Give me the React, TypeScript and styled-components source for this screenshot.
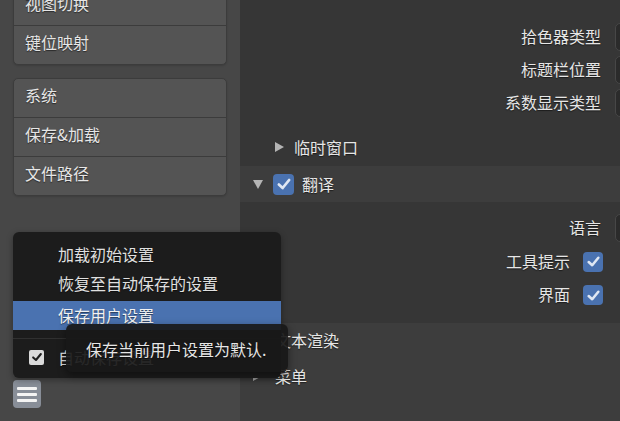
import React from "react";
import styled, { createGlobalStyle } from "styled-components";

const Global = createGlobalStyle`
  html, body { margin: 0; padding: 0; background: #363636; }
  body { font-family: "Noto Sans CJK SC", "Noto Sans", sans-serif; }
  * { box-sizing: border-box; }
`;

const Screen = styled.div`
  position: relative;
  width: 620px;
  height: 421px;
  overflow: hidden;
  display: flex;
  font-family: "Noto Sans CJK SC", "Noto Sans", sans-serif;
  font-size: 16px;
  color: #e6e6e6;
  text-shadow: 0 1px 1px rgba(0, 0, 0, 0.5);
`;

const Sidebar = styled.div`
  width: 240px;
  flex: none;
  background: #474747;
  display: flex;
  flex-direction: column;
  padding: 0 13px 13px 13px;
`;

const NavGroup = styled.div<{ $offset?: number }>`
  display: flex;
  flex-direction: column;
  margin-top: ${(p) => p.$offset ?? 13}px;
  background: #545454;
  border: 1px solid #3c3c3c;
  border-radius: 5px;
  box-shadow: 0 1px 2px rgba(0, 0, 0, 0.15);
`;

const NavItem = styled.div`
  height: 38px;
  display: flex;
  align-items: center;
  padding: 0 0 6px 11px;
  & + & { border-top: 1px solid #3c3c3c; height: 39px; }
`;

const Spacer = styled.div`
  flex: 1;
`;

const MenuButton = styled.div`
  width: 28px;
  height: 28px;
  border-radius: 4px;
  background: #888e98;
  display: flex;
  flex-direction: column;
  justify-content: center;
  align-items: center;
  gap: 3px;
`;

const Bar = styled.div`
  width: 20px;
  height: 3px;
  border-radius: 1px;
  background: #f4f4f4;
`;

const Main = styled.div`
  flex: 1;
  background: #363636;
  display: flex;
  flex-direction: column;
  padding-top: 23px;
  overflow: hidden;
`;

const PropList = styled.div<{ $gap: number }>`
  display: flex;
  flex-direction: column;
  gap: ${(p) => p.$gap}px;
`;

const PropRow = styled.div`
  height: 28px;
  display: grid;
  grid-template-columns: 361px 100px;
  column-gap: 14px;
  align-items: center;
`;

const Label = styled.div`
  text-align: right;
  white-space: nowrap;
  padding-bottom: 2px;
`;

const Dropdown = styled.div`
  height: 28px;
  border-radius: 5px;
  background: #2b2b2b;
  border: 1px solid #474747;
`;

const CheckRow = styled.div`
  height: 28px;
  display: flex;
  justify-content: flex-end;
  align-items: center;
  gap: 13px;
  padding-right: 17px;
`;

const SubHeader = styled.div`
  margin-top: 14px;
  height: 35px;
  display: flex;
  align-items: center;
  padding: 0 0 4px 35px;
  gap: 10px;
`;

const PanelHeader = styled.div<{ $bg?: string; $lift?: number; $gap?: number }>`
  height: 36px;
  flex: none;
  display: flex;
  align-items: center;
  padding: 0 0 ${(p) => p.$lift ?? 0}px 13px;
  gap: ${(p) => p.$gap ?? 10}px;
  background: ${(p) => p.$bg ?? "#3d3d3d"};
`;

const HeaderTitle = styled.span<{ $pull?: number }>`
  margin-left: ${(p) => -(p.$pull ?? 0)}px;
`;

const PanelBody = styled.div`
  padding: 12px 0 14px 0;
`;

const Lower = styled.div`
  flex: 1;
  background: #3d3d3d;
`;

const CheckBox = styled.div<{ $size: number }>`
  width: ${(p) => p.$size}px;
  height: ${(p) => p.$size}px;
  border-radius: 4px;
  background: #4a72b0;
  display: flex;
  align-items: center;
  justify-content: center;
  flex: none;
`;

const Popup = styled.div`
  position: absolute;
  left: 13px;
  top: 232px;
  width: 268px;
  height: 146px;
  background: #1c1c1c;
  border-radius: 6px;
  box-shadow: 0 2px 6px rgba(0, 0, 0, 0.35);
  padding-top: 8px;
  display: flex;
  flex-direction: column;
  color: #e0e0e0;
`;

const PopItem = styled.div<{ $active?: boolean }>`
  height: 29px;
  flex: none;
  display: flex;
  align-items: center;
  padding: 0 0 1px 45px;
  margin-top: ${(p) => (p.$active ? 3 : 0)}px;
  background: ${(p) => (p.$active ? "#4a72b0" : "transparent")};
  color: ${(p) => (p.$active ? "#f2f2f2" : "inherit")};
`;

const Separator = styled.div`
  height: 1px;
  flex: none;
  margin-top: 8px;
  background: #303030;
`;

const PopCheckRow = styled.div`
  height: 28px;
  flex: none;
  margin-top: 4px;
  display: flex;
  align-items: center;
  padding-left: 16px;
  gap: 14px;
`;

const LightBox = styled.div`
  width: 15px;
  height: 15px;
  border-radius: 2px;
  background: #dadada;
  display: flex;
  align-items: center;
  justify-content: center;
`;

const Tooltip = styled.div`
  position: absolute;
  left: 66px;
  top: 324px;
  width: 222px;
  height: 48px;
  background: rgba(24, 24, 24, 0.92);
  border-radius: 6px;
  box-shadow: 0 3px 8px rgba(0, 0, 0, 0.45);
  display: flex;
  align-items: center;
  padding: 2px 0 0 20px;
  color: #e6e6e6;
  white-space: nowrap;
`;

const TriRight = () => (
  <svg width="9" height="10" viewBox="0 0 9 10">
    <polygon points="0,0 9,5 0,10" fill="#b4b4b4" />
  </svg>
);

const TriDown = () => (
  <svg width="10" height="9" viewBox="0 0 10 9">
    <polygon points="0,0 10,0 5,9" fill="#b4b4b4" />
  </svg>
);

const Check = ({ color, w }: { color: string; w: number }) => (
  <svg width={w} height={w} viewBox="0 0 14 14">
    <polyline
      points="2.5,7.5 5.8,10.5 11.5,3.5"
      fill="none"
      stroke={color}
      strokeWidth="2.4"
      strokeLinecap="round"
      strokeLinejoin="round"
    />
  </svg>
);

const BlueCheck = ({ size }: { size: number }) => (
  <CheckBox $size={size}>
    <Check color="#dfe7f3" w={size - 5} />
  </CheckBox>
);

export default function App() {
  return (
    <>
      <Global />
      <Screen>
        <Sidebar>
          <NavGroup $offset={-14}>
            <NavItem>视图切换</NavItem>
            <NavItem>键位映射</NavItem>
          </NavGroup>
          <NavGroup>
            <NavItem>系统</NavItem>
            <NavItem>保存&amp;加载</NavItem>
            <NavItem>文件路径</NavItem>
          </NavGroup>
          <Spacer />
          <MenuButton>
            <Bar />
            <Bar />
            <Bar />
          </MenuButton>
        </Sidebar>
        <Main>
          <PropList $gap={5}>
            <PropRow>
              <Label>拾色器类型</Label>
              <Dropdown />
            </PropRow>
            <PropRow>
              <Label>标题栏位置</Label>
              <Dropdown />
            </PropRow>
            <PropRow>
              <Label>系数显示类型</Label>
              <Dropdown />
            </PropRow>
          </PropList>
          <SubHeader>
            <TriRight />
            <span>临时窗口</span>
          </SubHeader>
          <PanelHeader>
            <TriDown />
            <BlueCheck size={21} />
            <HeaderTitle $pull={2}>翻译</HeaderTitle>
          </PanelHeader>
          <PanelBody>
            <PropList $gap={5.5}>
              <PropRow>
                <Label>语言</Label>
                <Dropdown />
              </PropRow>
              <CheckRow>
                <Label>工具提示</Label>
                <BlueCheck size={20} />
              </CheckRow>
              <CheckRow>
                <Label>界面</Label>
                <BlueCheck size={20} />
              </CheckRow>
            </PropList>
          </PanelBody>
          <Lower>
            <PanelHeader $bg="transparent" $lift={3} $gap={13}>
              <TriRight />
              <HeaderTitle>文本渲染</HeaderTitle>
            </PanelHeader>
            <PanelHeader $bg="transparent" $lift={3} $gap={13}>
              <TriRight />
              <HeaderTitle>菜单</HeaderTitle>
            </PanelHeader>
          </Lower>
        </Main>
        <Popup>
          <PopItem>加载初始设置</PopItem>
          <PopItem>恢复至自动保存的设置</PopItem>
          <PopItem $active>保存用户设置</PopItem>
          <Separator />
          <PopCheckRow>
            <LightBox>
              <Check color="#1e1e1e" w={12} />
            </LightBox>
            <span>自动保存设置</span>
          </PopCheckRow>
        </Popup>
        <Tooltip>保存当前用户设置为默认.</Tooltip>
      </Screen>
    </>
  );
}
